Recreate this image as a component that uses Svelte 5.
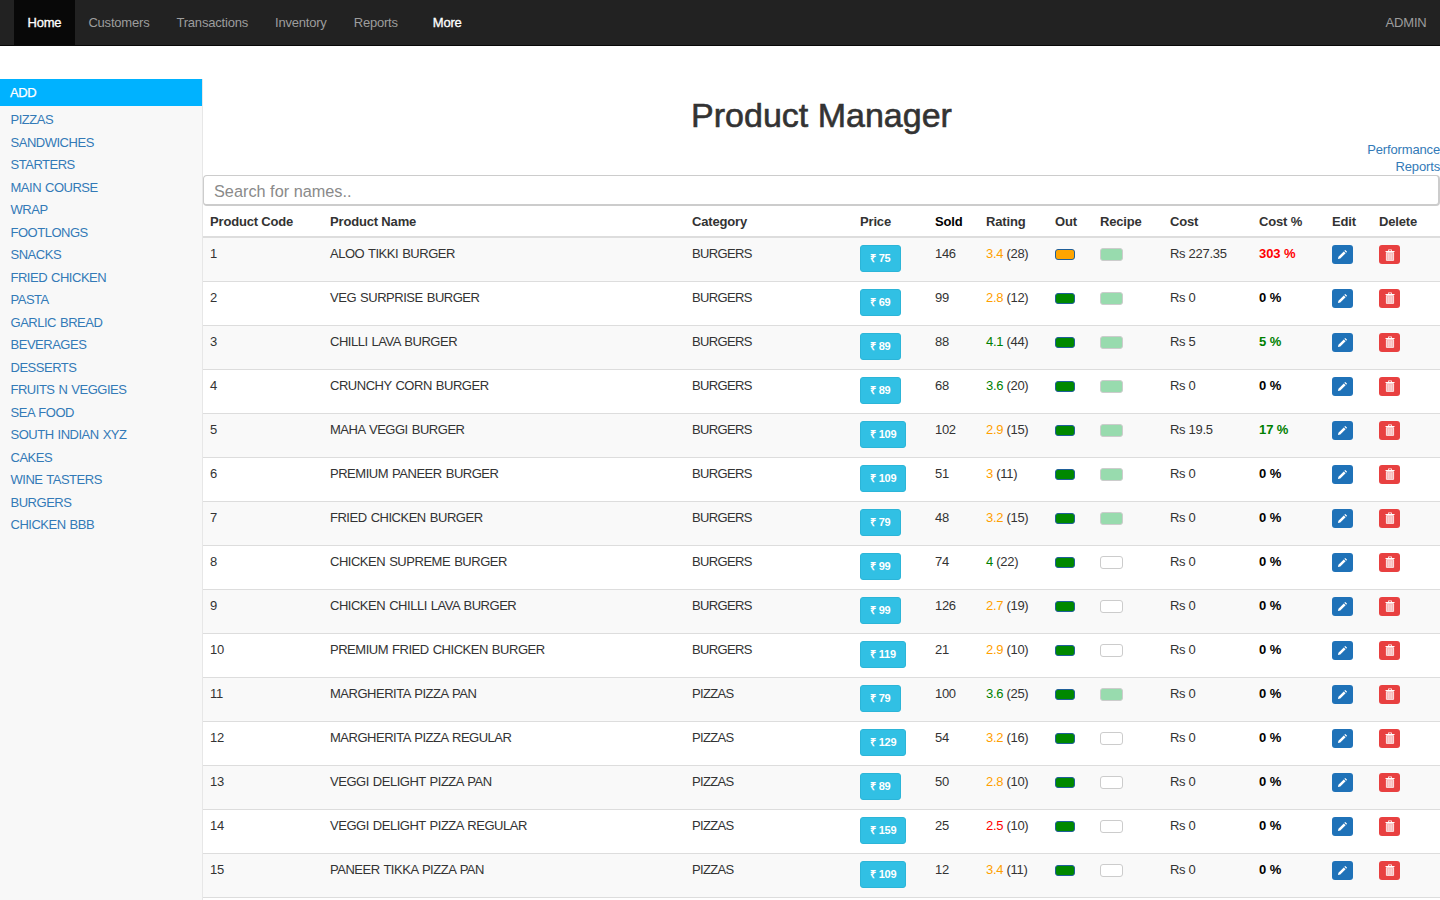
<script>
  const navItems = ['Customers', 'Transactions', 'Inventory', 'Reports'];

  const categories = [
    'PIZZAS', 'SANDWICHES', 'STARTERS', 'MAIN COURSE', 'WRAP', 'FOOTLONGS', 'SNACKS',
    'FRIED CHICKEN', 'PASTA', 'GARLIC BREAD', 'BEVERAGES', 'DESSERTS', 'FRUITS N VEGGIES',
    'SEA FOOD', 'SOUTH INDIAN XYZ', 'CAKES', 'WINE TASTERS', 'BURGERS', 'CHICKEN BBB'
  ];

  const columns = [
    'Product Code', 'Product Name', 'Category', 'Price', 'Sold', 'Rating',
    'Out', 'Recipe', 'Cost', 'Cost %', 'Edit', 'Delete'
  ];

  const products = [
    { name: 'ALOO TIKKI BURGER', cat: 'BURGERS', price: 75, sold: 146, rating: 3.4, votes: 28, low: true, recipe: true, cost: '227.35', pct: 303 },
    { name: 'VEG SURPRISE BURGER', cat: 'BURGERS', price: 69, sold: 99, rating: 2.8, votes: 12, recipe: true, cost: '0', pct: 0 },
    { name: 'CHILLI LAVA BURGER', cat: 'BURGERS', price: 89, sold: 88, rating: 4.1, votes: 44, recipe: true, cost: '5', pct: 5 },
    { name: 'CRUNCHY CORN BURGER', cat: 'BURGERS', price: 89, sold: 68, rating: 3.6, votes: 20, recipe: true, cost: '0', pct: 0 },
    { name: 'MAHA VEGGI BURGER', cat: 'BURGERS', price: 109, sold: 102, rating: 2.9, votes: 15, recipe: true, cost: '19.5', pct: 17 },
    { name: 'PREMIUM PANEER BURGER', cat: 'BURGERS', price: 109, sold: 51, rating: 3, votes: 11, recipe: true, cost: '0', pct: 0 },
    { name: 'FRIED CHICKEN BURGER', cat: 'BURGERS', price: 79, sold: 48, rating: 3.2, votes: 15, recipe: true, cost: '0', pct: 0 },
    { name: 'CHICKEN SUPREME BURGER', cat: 'BURGERS', price: 99, sold: 74, rating: 4, votes: 22, recipe: false, cost: '0', pct: 0 },
    { name: 'CHICKEN CHILLI LAVA BURGER', cat: 'BURGERS', price: 99, sold: 126, rating: 2.7, votes: 19, recipe: false, cost: '0', pct: 0 },
    { name: 'PREMIUM FRIED CHICKEN BURGER', cat: 'BURGERS', price: 119, sold: 21, rating: 2.9, votes: 10, recipe: false, cost: '0', pct: 0 },
    { name: 'MARGHERITA PIZZA PAN', cat: 'PIZZAS', price: 79, sold: 100, rating: 3.6, votes: 25, recipe: true, cost: '0', pct: 0 },
    { name: 'MARGHERITA PIZZA REGULAR', cat: 'PIZZAS', price: 129, sold: 54, rating: 3.2, votes: 16, recipe: false, cost: '0', pct: 0 },
    { name: 'VEGGI DELIGHT PIZZA PAN', cat: 'PIZZAS', price: 89, sold: 50, rating: 2.8, votes: 10, recipe: false, cost: '0', pct: 0 },
    { name: 'VEGGI DELIGHT PIZZA REGULAR', cat: 'PIZZAS', price: 159, sold: 25, rating: 2.5, votes: 10, recipe: false, cost: '0', pct: 0 },
    { name: 'PANEER TIKKA PIZZA PAN', cat: 'PIZZAS', price: 109, sold: 12, rating: 3.4, votes: 11, recipe: false, cost: '0', pct: 0 }
  ];

  function ratingClass(r) {
    if (r >= 3.5) return 'good';
    if (r > 2.5) return 'okay';
    return 'bad';
  }

  function pctClass(p) {
    if (p > 100) return 'bad';
    if (p > 0) return 'good';
    return '';
  }
</script>

<nav class="navbar">
  <a class="nav-link active" href="#home">Home</a>
  {#each navItems as item}
    <a class="nav-link" href="#item">{item}</a>
  {/each}
  <a class="nav-link more" href="#more">More</a>
  <a class="nav-link admin" href="#admin">ADMIN</a>
</nav>

<div class="page">
  <aside class="sidebar">
    <a class="add" href="#add">ADD</a>
    <ul>
      {#each categories as cat}
        <li><a href="#cat">{cat}</a></li>
      {/each}
    </ul>
  </aside>

  <main class="content">
    <h1>Product Manager</h1>
    <div class="report-link">
      <a href="#perf">Performance<br />Reports</a>
    </div>
    <input class="search" type="text" placeholder="Search for names.." />

    <table>
      <colgroup>
        <col style="width: 120px" />
        <col style="width: 362px" />
        <col style="width: 168px" />
        <col style="width: 75px" />
        <col style="width: 51px" />
        <col style="width: 69px" />
        <col style="width: 45px" />
        <col style="width: 70px" />
        <col style="width: 89px" />
        <col style="width: 73px" />
        <col style="width: 47px" />
        <col style="width: 68px" />
      </colgroup>
      <thead>
        <tr>
          {#each columns as col}
            <th class:sold={col === 'Sold'}>{col}</th>
          {/each}
        </tr>
      </thead>
      <tbody>
        {#each products as p, i}
          <tr>
            <td>{i + 1}</td>
            <td class="caps">{p.name}</td>
            <td class="cat">{p.cat}</td>
            <td><button class="price" type="button">₹ {p.price}</button></td>
            <td>{p.sold}</td>
            <td><span class={ratingClass(p.rating)}>{p.rating}</span> ({p.votes})</td>
            <td><span class="stock" class:low={p.low}></span></td>
            <td><span class="recipe" class:on={p.recipe}></span></td>
            <td>Rs {p.cost}</td>
            <td class="pct {pctClass(p.pct)}">{p.pct} %</td>
            <td>
              <button class="icon-btn edit" type="button" aria-label="Edit">
                <svg viewBox="0 0 12 12" width="11" height="11">
                  <path d="M9 1 L11 3 L10 4 L8 2 Z M7.4 2.6 L9.4 4.6 L3.6 10.4 L1 11 L1.6 8.4 Z" fill="#fff" />
                </svg>
              </button>
            </td>
            <td>
              <button class="icon-btn del" type="button" aria-label="Delete">
                <svg viewBox="0 0 10 12" width="10" height="12">
                  <path d="M0.5 2 H9.5 V3 H0.5 Z M3.2 2 V0.6 H6.8 V2 H6 V1.3 H4 V2 Z" fill="#fff" />
                  <path d="M1.4 3.6 H8.6 V11.4 H1.4 Z" fill="#f5a6a6" stroke="#fff" stroke-width="0.8" />
                  <path d="M3.2 4.4 V10.8 M5 4.4 V10.8 M6.8 4.4 V10.8" stroke="#fff" stroke-width="0.7" fill="none" />
                </svg>
              </button>
            </td>
          </tr>
        {/each}
      </tbody>
    </table>
  </main>
</div>

<style>
  :global(body) {
    margin: 0;
    font-family: "Liberation Sans", Arial, sans-serif;
    font-size: 13px;
    color: #333;
    background: #fff;
    overflow: hidden;
  }

  a {
    text-decoration: none;
    color: #337ab7;
  }

  /* Top bar */
  .navbar {
    display: flex;
    height: 45px;
    padding-left: 14px;
    background: #222;
    border-bottom: 1px solid #080808;
  }

  .nav-link {
    display: flex;
    align-items: center;
    padding: 0 13.5px;
    color: #9d9d9d;
    font-size: 13px;
    letter-spacing: -0.2px;
  }

  .nav-link.active {
    background: #080808;
    color: #fff;
    -webkit-text-stroke: 0.3px #fff;
  }

  .nav-link.more {
    margin-left: 8px;
    color: #fff;
    -webkit-text-stroke: 0.3px #fff;
  }

  .nav-link.admin {
    margin-left: auto;
  }

  .page {
    display: flex;
    height: 854px;
  }

  /* Sidebar */
  .sidebar {
    width: 202px;
    flex-shrink: 0;
    margin-top: 33px;
    background: #f8f8f8;
    border-right: 1px solid #e7e7e7;
  }

  .add {
    display: block;
    height: 27px;
    line-height: 27px;
    padding-left: 10px;
    background: #00b2ff;
    color: #fff;
    letter-spacing: -0.4px;
    -webkit-text-stroke: 0.25px #fff;
  }

  .sidebar ul {
    list-style: none;
    margin: 3px 0 0;
    padding: 0;
  }

  .sidebar li {
    height: 22.5px;
    line-height: 22.5px;
    padding-left: 10.5px;
    letter-spacing: -0.48px;
    word-spacing: 0.8px;
  }

  /* Main area */
  .content {
    flex: 1;
    min-width: 0;
  }

  h1 {
    margin: 49px 0 0;
    text-align: center;
    font-size: 34px;
    line-height: 40px;
    font-weight: 500;
    -webkit-text-stroke: 0.6px #333;
  }

  .report-link {
    margin-top: 6px;
    text-align: right;
    line-height: 17px;
    height: 34px;
    letter-spacing: -0.15px;
  }

  .search {
    display: block;
    box-sizing: border-box;
    width: 100%;
    height: 31px;
    padding: 3px 10px 0;
    border: 2px solid #ccc;
    border-width: 1px 2px 2px 1px;
    border-radius: 4px;
    font-family: inherit;
    font-size: 16.3px;
    outline: none;
  }

  .search::placeholder {
    color: #8a8a8a;
  }

  table {
    width: 1237px;
    table-layout: fixed;
    border-collapse: collapse;
  }

  th {
    text-align: left;
    height: 31px;
    padding: 0 7px;
    border-bottom: 2px solid #ddd;
    font-weight: bold;
    box-sizing: border-box;
    letter-spacing: -0.17px;
  }

  th.sold {
    color: #000;
  }

  td {
    height: 44px;
    box-sizing: border-box;
    padding: 7px;
    vertical-align: top;
    border-bottom: 1px solid #ddd;
    line-height: 18px;
    letter-spacing: -0.3px;
  }

  td.caps {
    letter-spacing: -0.48px;
    word-spacing: 0.9px;
  }

  td.cat {
    letter-spacing: -0.65px;
  }

  tbody tr:nth-child(odd) {
    background: #f9f9f9;
  }

  .price {
    height: 27px;
    padding: 0 9px 2px;
    background: #31c0e4;
    border: 1px solid #2cb5d8;
    border-radius: 3px;
    color: #fff;
    font-family: inherit;
    font-size: 11px;
    font-weight: bold;
    letter-spacing: -0.2px;
  }

  .good { color: #008000; }
  .okay { color: #ffa000; }
  .bad { color: #f00; }

  .pct {
    font-weight: bold;
    color: #000;
    letter-spacing: -0.1px;
  }

  .pct.good { color: #008000; }
  .pct.bad { color: #f00; }

  .stock {
    display: block;
    box-sizing: border-box;
    width: 20px;
    height: 11px;
    margin-top: 4px;
    background: #008800;
    border: 1px solid #1f5f9a;
    border-radius: 3px;
  }

  .stock.low {
    background: #ffa500;
  }

  .recipe {
    display: block;
    box-sizing: border-box;
    width: 23px;
    height: 13px;
    margin-top: 3px;
    background: #fff;
    border: 1px solid #ccc;
    border-radius: 3px;
  }

  .recipe.on {
    background: #98dbae;
  }

  .icon-btn {
    display: flex;
    align-items: center;
    justify-content: center;
    width: 21px;
    height: 19px;
    padding: 0;
    border: none;
    border-radius: 3px;
  }

  .icon-btn.edit { background: #1f72b8; }
  .icon-btn.del { background: #e84040; }
</style>
